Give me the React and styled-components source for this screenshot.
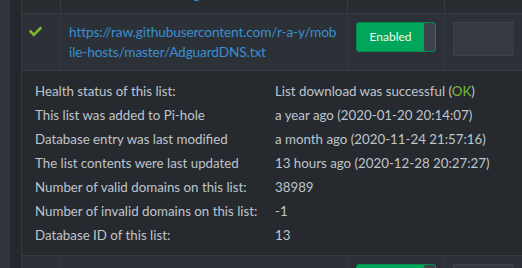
import React from "react";
import styled, { createGlobalStyle } from "styled-components";
import { FaCheck } from "react-icons/fa";

const GlobalStyle = createGlobalStyle`
	* {
		box-sizing: border-box;
	}
	body {
		margin: 0;
		background: #272b30;
		font-family: Lato, "Liberation Sans", sans-serif;
		font-size: 13.3px;
		color: #bec5cb;
	}
`;

const Page = styled.div`
	display: flex;
	width: 522px;
	height: 268px;
	overflow: hidden;
`;

const Rail = styled.div`
	width: 10px;
	flex-shrink: 0;
	background: #2f343a;
`;

const Gutter = styled.div`
	width: 12px;
	flex-shrink: 0;
	background: #24282c;
	border-right: 1px solid #353b41;
`;

const Table = styled.div`
	flex: 1;
	display: flex;
	flex-direction: column;
	min-width: 0;
`;

const Row = styled.div`
	display: grid;
	grid-template-columns: 39px 287px 97px 1fr;
	grid-template-rows: minmax(0, 1fr);
	height: ${({ $height }) => $height}px;
	flex-shrink: 0;
	background: ${({ $dim }) => ($dim ? "#292d32" : "#2c3137")};
	border-bottom: 1px solid #353b41;
	overflow: hidden;
`;

const Cell = styled.div`
	padding: ${({ $bottom }) => ($bottom ? "0 8px 9px" : "8px")};
	border-right: 1px solid #353b41;
	line-height: 20px;
	min-width: 0;
	min-height: 0;
	display: flex;
	align-items: ${({ $bottom }) => ($bottom ? "flex-end" : "flex-start")};
	overflow: hidden;

	&:last-child {
		border-right: none;
	}
`;

const Check = styled(FaCheck)`
	color: #7cb82f;
	font-size: 13px;
	margin-top: 3px;
	margin-left: -1px;
`;

const Url = styled.a`
	color: #3a8fd0;
	font-size: 13.7px;
	text-decoration: none;
	word-break: break-all;
	letter-spacing: -0.15px;
	white-space: ${({ $nowrap }) => ($nowrap ? "nowrap" : "normal")};
`;

const Toggle = styled.div`
	display: flex;
	width: 80px;
	height: 30px;
	background: #00a65a;
	border: 1px solid #008d4c;
	border-radius: 3px;
`;

const ToggleLabel = styled.span`
	flex: 1;
	display: flex;
	align-items: center;
	justify-content: center;
	color: #f4fbf0;
	font-size: 12px;
`;

const Handle = styled.span`
	width: 11px;
	background: #3d434a;
	border-radius: 2px;
`;

const Comment = styled.div`
	width: 100%;
	height: 34px;
	background: #343a40;
	border: 1px solid #3d434a;
	border-right: none;
`;

const Details = styled.div`
	display: grid;
	grid-template-columns: 240px 1fr;
	align-content: start;
	height: 185px;
	flex-shrink: 0;
	padding: 8px 13px;
	background: #262a2f;
	border-bottom: 1px solid #353b41;
	line-height: 24px;
	white-space: nowrap;
`;

const Ok = styled.span`
	color: #7cb82f;
`;

const details = [
	["Health status of this list:", <>List download was successful (<Ok>OK</Ok>)</>],
	["This list was added to Pi-hole", "a year ago (2020-01-20 20:14:07)"],
	["Database entry was last modified", "a month ago (2020-11-24 21:57:16)"],
	["The list contents were last updated", "13 hours ago (2020-12-28 20:27:27)"],
	["Number of valid domains on this list:", "38989"],
	["Number of invalid domains on this list:", "-1"],
	["Database ID of this list:", "13"],
];

export default function App() {
	return (
		<>
			<GlobalStyle />
			<Page>
				<Rail />
				<Gutter />
				<Table>
					<Row $height={14} $dim>
						<Cell />
						<Cell $bottom>
							<Url $nowrap>ster/hosts/Advertising.txt</Url>
						</Cell>
						<Cell />
						<Cell />
					</Row>
					<Row $height={57}>
						<Cell>
							<Check />
						</Cell>
						<Cell>
							<Url href="#">
								https://raw.githubusercontent.com/r-a-y/mobile-hosts/master/AdguardDNS.txt
							</Url>
						</Cell>
						<Cell>
							<Toggle>
								<ToggleLabel>Enabled</ToggleLabel>
								<Handle />
							</Toggle>
						</Cell>
						<Cell>
							<Comment />
						</Cell>
					</Row>
					<Details>
						{details.map(([label, value], key) => (
							<React.Fragment key={key}>
								<span>{label}</span>
								<span>{value}</span>
							</React.Fragment>
						))}
					</Details>
					<Row $height={60}>
						<Cell />
						<Cell />
						<Cell>
							<Toggle>
								<ToggleLabel>Enabled</ToggleLabel>
								<Handle />
							</Toggle>
						</Cell>
						<Cell>
							<Comment />
						</Cell>
					</Row>
				</Table>
			</Page>
		</>
	);
}
